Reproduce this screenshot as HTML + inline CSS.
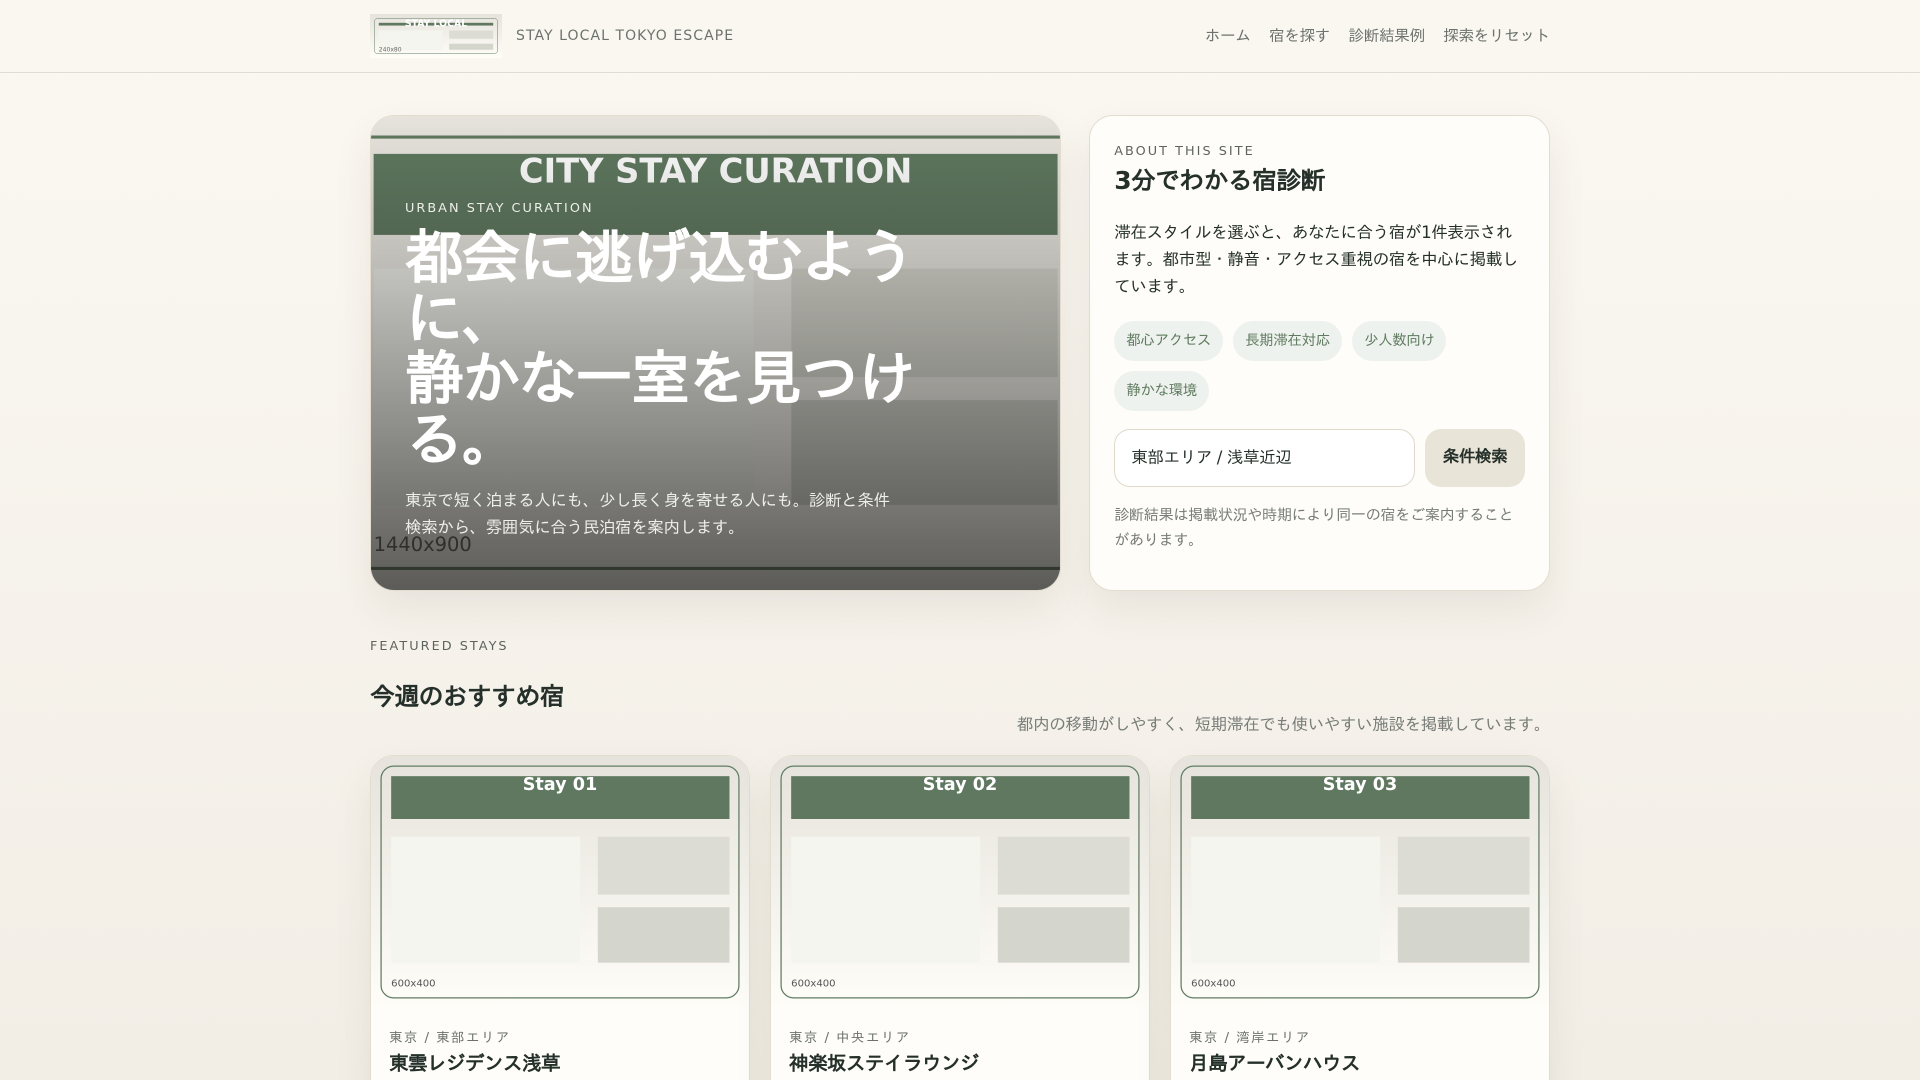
<!DOCTYPE html>
<html lang="ja">
<head>
<meta charset="utf-8">
<title>Stay Local Tokyo Escape</title>
<style>
*{box-sizing:border-box;margin:0;padding:0}
html,body{width:1920px;height:1080px;overflow:hidden}
body{font-family:"DejaVu Sans","IPAGothic",sans-serif;color:#25302a;background:linear-gradient(180deg,#fbf8f2 0%,#f2eee6 100%);position:relative}
svg{letter-spacing:0}
header{height:73px;border-bottom:1px solid #e0dcd3;background:#faf7f1}
.wrap{width:1180px;margin:0 auto;position:relative}
.head{display:flex;align-items:center;justify-content:space-between;height:72px}
.brand{display:flex;align-items:center;gap:14px;font-size:14px;letter-spacing:.076em;color:#6d726d;white-space:nowrap}
.brand svg{display:block;width:132px;height:44px}
nav{display:flex;gap:18.4px;font-size:15.6px;letter-spacing:-.33px;color:#6d726d;margin-top:-1px}
.top{display:grid;grid-template-columns:691.2px 460.8px;gap:28px;margin-top:42px;height:475.5px}
.hero{position:relative;border-radius:24px;overflow:hidden;border:1px solid #e3ddd0;height:475.5px;box-shadow:0 18px 40px rgba(60,50,30,.08)}
.hero svg{position:absolute;left:0;top:0;width:100%;height:100%;display:block}
.hero .ov{position:absolute;inset:0;background:linear-gradient(180deg,rgba(25,25,22,0) 0%,rgba(25,25,22,.71) 100%)}
.hero .ct{position:absolute;left:34px;bottom:48px;color:#fff;white-space:nowrap}
.hero .eb{font-size:12.8px;letter-spacing:.16em;line-height:22px;color:#ecefe9}
.hero h1{font-size:59px;letter-spacing:-2.44px;line-height:60.5px;font-weight:700;margin-top:8px}
.hero p{font-size:16.6px;letter-spacing:-.44px;line-height:27.2px;margin-top:17px;color:#efefea}
.panel{background:#fffdf9;border:1px solid #e3ddd0;border-radius:24px;padding:24px;height:475.5px;box-shadow:0 18px 40px rgba(60,50,30,.08)}
.panel .eb{font-size:12.8px;letter-spacing:.16em;line-height:22px;color:#5e635f;margin-top:1px}
.panel h2{font-size:25px;letter-spacing:-.76px;line-height:31px;margin-top:2px;font-weight:700}
.panel>p.a{font-size:16.6px;letter-spacing:-.44px;line-height:27.2px;margin-top:23px;white-space:nowrap}
.tags{display:flex;flex-wrap:wrap;gap:10px;margin-top:20px}
.tags span{height:40px;line-height:40px;padding:0 12px;border-radius:999px;background:#eef2ee;color:#5f7a5f;font-size:14.6px;letter-spacing:-.46px}
.form{display:flex;gap:10px;margin-top:18px}
.inp{width:300.8px;height:58px;border:1px solid #e0d9cb;border-radius:16px;background:#fff;font-size:16.6px;letter-spacing:-.44px;line-height:56px;padding-left:16px;color:#25302a}
.btn{width:100px;height:58px;border-radius:16px;background:#e9e4d8;font-size:16.6px;letter-spacing:-.44px;font-weight:700;text-align:center;line-height:56px}
.panel .note{font-size:15.2px;letter-spacing:-.4px;line-height:25.5px;color:#777c77;margin-top:16px;white-space:nowrap}
.lab{margin-top:45.5px;font-size:12.8px;letter-spacing:.16em;line-height:22px;color:#5e635f}
.sec h2{font-size:25px;letter-spacing:-.76px;line-height:34px;margin-top:22px}
.sec .d{font-size:16.6px;letter-spacing:-.44px;line-height:27px;margin-top:-3px;color:#777c77;text-align:right}
.cards{display:grid;grid-template-columns:repeat(3,380px);gap:20px;margin-top:17px}
.card{height:500px;background:#fffdf9;border:1px solid #e3ddd0;border-radius:24px;overflow:hidden;box-shadow:0 18px 40px rgba(60,50,30,.08)}
.card svg{display:block;width:378px;height:252px}
.card .b{padding:19.5px 18px}
.card .m{font-size:13.5px;letter-spacing:1.4px;line-height:20px;color:#6d726d}
.card h3{font-size:19.6px;letter-spacing:-.6px;line-height:30px;font-weight:700;margin-top:1px}
</style>
</head>
<body>
<svg width="0" height="0" style="position:absolute">
<defs><linearGradient id="g" x1="0" y1="0" x2="0" y2="1"><stop offset="0" stop-color="#e6e3dc"/><stop offset="1" stop-color="#fffdf8"/></linearGradient></defs>
</svg>
<header><div class="wrap head">
<div class="brand">
<svg viewBox="0 0 240 80"><rect width="240" height="80" fill="url(#g)"/><rect x="8" y="8" width="224" height="64" rx="6" fill="none" stroke="#607d62" stroke-width=".9"/><rect x="16" y="16" width="208" height="5" fill="#5f785f"/><rect x="16" y="30" width="116" height="36" fill="#f4f5ef"/><rect x="144" y="30" width="80" height="15" fill="#dcdcd4"/><rect x="144" y="54" width="80" height="11" fill="#d4d6ce"/><text x="120" y="23" text-anchor="middle" font-family="DejaVu Sans,sans-serif" font-weight="700" font-size="17" fill="#fff">STAY LOCAL</text><text x="16" y="68" font-family="DejaVu Sans,sans-serif" font-size="11" fill="#666">240x80</text></svg>
<span>STAY LOCAL TOKYO ESCAPE</span>
</div>
<nav><span>ホーム</span><span>宿を探す</span><span>診断結果例</span><span>探索をリセット</span></nav>
</div></header>
<main class="wrap">
<div class="top">
<section class="hero">
<svg viewBox="0 0 1440 900" preserveAspectRatio="xMidYMid slice"><rect width="1440" height="900" fill="url(#g)"/><rect x="40" y="40" width="1360" height="820" rx="24" fill="none" stroke="#5f785f" stroke-width="6"/><rect x="70" y="72" width="1300" height="154" fill="#5f785f"/><rect x="70" y="290" width="722" height="450" fill="#f4f5ef"/><rect x="864" y="290" width="506" height="206" fill="#dcdcd4"/><rect x="864" y="540" width="506" height="199" fill="#d4d6ce"/><text x="720" y="126" text-anchor="middle" font-family="DejaVu Sans,sans-serif" font-weight="700" font-size="64" fill="#fff">CITY STAY CURATION</text><text x="70" y="827" font-family="DejaVu Sans,sans-serif" font-size="37" fill="#555">1440x900</text></svg>
<div class="ov"></div>
<div class="ct">
<div class="eb">URBAN STAY CURATION</div>
<h1>都会に逃げ込むよう<br>に、<br>静かな一室を見つけ<br>る。</h1>
<p>東京で短く泊まる人にも、少し長く身を寄せる人にも。診断と条件<br>検索から、雰囲気に合う民泊宿を案内します。</p>
</div>
</section>
<aside class="panel">
<div class="eb">ABOUT THIS SITE</div>
<h2>3分でわかる宿診断</h2>
<p class="a">滞在スタイルを選ぶと、あなたに合う宿が1件表示され<br>ます。都市型・静音・アクセス重視の宿を中心に掲載し<br>ています。</p>
<div class="tags"><span>都心アクセス</span><span>長期滞在対応</span><span>少人数向け</span><span>静かな環境</span></div>
<div class="form"><div class="inp">東部エリア / 浅草近辺</div><div class="btn">条件検索</div></div>
<p class="note">診断結果は掲載状況や時期により同一の宿をご案内すること<br>があります。</p>
</aside>
</div>
<section class="sec">
<div class="lab">FEATURED STAYS</div>
<h2>今週のおすすめ宿</h2>
<div class="d">都内の移動がしやすく、短期滞在でも使いやすい施設を掲載しています。</div>
<div class="cards">
<article class="card"><svg viewBox="0 0 600 400"><rect width="600" height="400" fill="url(#g)"/><rect x="16" y="16" width="568" height="368" rx="20" fill="none" stroke="#607d62" stroke-width="2"/><rect x="32" y="32" width="537" height="68" fill="#5f785f"/><rect x="32" y="128" width="300" height="200" fill="#f4f5ef"/><rect x="360" y="128" width="209" height="92" fill="#dcdcd4"/><rect x="360" y="240" width="209" height="88" fill="#d4d6ce"/><text x="300" y="54" text-anchor="middle" font-family="DejaVu Sans,sans-serif" font-weight="700" font-size="28" fill="#fff">Stay 01</text><text x="32" y="366" font-family="DejaVu Sans,sans-serif" font-size="16" fill="#555">600x400</text></svg><div class="b"><div class="m">東京 / 東部エリア</div><h3>東雲レジデンス浅草</h3></div></article>
<article class="card"><svg viewBox="0 0 600 400"><rect width="600" height="400" fill="url(#g)"/><rect x="16" y="16" width="568" height="368" rx="20" fill="none" stroke="#607d62" stroke-width="2"/><rect x="32" y="32" width="537" height="68" fill="#5f785f"/><rect x="32" y="128" width="300" height="200" fill="#f4f5ef"/><rect x="360" y="128" width="209" height="92" fill="#dcdcd4"/><rect x="360" y="240" width="209" height="88" fill="#d4d6ce"/><text x="300" y="54" text-anchor="middle" font-family="DejaVu Sans,sans-serif" font-weight="700" font-size="28" fill="#fff">Stay 02</text><text x="32" y="366" font-family="DejaVu Sans,sans-serif" font-size="16" fill="#555">600x400</text></svg><div class="b"><div class="m">東京 / 中央エリア</div><h3>神楽坂ステイラウンジ</h3></div></article>
<article class="card"><svg viewBox="0 0 600 400"><rect width="600" height="400" fill="url(#g)"/><rect x="16" y="16" width="568" height="368" rx="20" fill="none" stroke="#607d62" stroke-width="2"/><rect x="32" y="32" width="537" height="68" fill="#5f785f"/><rect x="32" y="128" width="300" height="200" fill="#f4f5ef"/><rect x="360" y="128" width="209" height="92" fill="#dcdcd4"/><rect x="360" y="240" width="209" height="88" fill="#d4d6ce"/><text x="300" y="54" text-anchor="middle" font-family="DejaVu Sans,sans-serif" font-weight="700" font-size="28" fill="#fff">Stay 03</text><text x="32" y="366" font-family="DejaVu Sans,sans-serif" font-size="16" fill="#555">600x400</text></svg><div class="b"><div class="m">東京 / 湾岸エリア</div><h3>月島アーバンハウス</h3></div></article>
</div>
</section>
</main>
</body>
</html>
